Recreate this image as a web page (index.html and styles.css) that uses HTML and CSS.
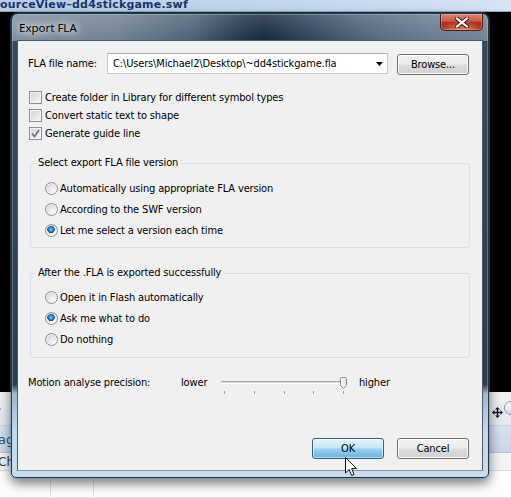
FILE: index.html
```html
<!DOCTYPE html>
<html>
<head>
<meta charset="utf-8">
<link rel="stylesheet" href="styles.css">
</head>
<body>
<div class="desk">
  <div class="appbar"><span class="apptitle">ourceView–dd4stickgame.swf</span></div>
  <div class="dark"></div>
  <div class="band band-a">
    <span class="tri">▸</span>
    <span class="movebox">
      <svg class="move" width="11" height="11" viewBox="0 0 11 11"><path d="M5.5 0 L8 2.5 H6.2 V4.8 H8.5 V3 L11 5.5 L8.5 8 V6.2 H6.2 V8.5 H8 L5.5 11 L3 8.5 H4.8 V6.2 H2.5 V8 L0 5.5 L2.5 3 V4.8 H4.8 V2.5 H3 Z" fill="#111"/></svg>
      <span class="knob"></span>
    </span>
  </div>
  <div class="band band-b"><span class="ag">ag</span></div>
  <div class="band band-c"><span class="cha">Cha</span></div>
  <div class="band band-d"><span class="vline v1"></span><span class="vline v2"></span></div>
</div>

<div class="window">
  <div class="titlebar">
    <span class="title">Export FLA</span>
    <span class="close">
      <svg width="14" height="11" viewBox="0 0 14 11"><path d="M2 1.5 L12 9.5 M12 1.5 L2 9.5" stroke="#3a1a16" stroke-width="4" stroke-linecap="square"/><path d="M2 1.5 L12 9.5 M12 1.5 L2 9.5" stroke="#fff" stroke-width="2.2" stroke-linecap="square"/></svg>
    </span>
  </div>
  <div class="client">
    <div class="file-row">
      <span class="file-label">FLA file name:</span>
      <div class="combo">
        <span class="combo-text">C:\Users\Michael2\Desktop\~dd4stickgame.fla</span>
        <svg class="combo-arrow" width="7" height="4" viewBox="0 0 7 4"><path d="M0 0 H7 L3.5 4 Z" fill="#000"/></svg>
      </div>
      <button class="btn browse">Browse...</button>
    </div>

    <div class="checks">
      <label class="check"><span class="box"></span>Create folder in Library for different symbol types</label>
      <label class="check"><span class="box"></span>Convert static text to shape</label>
      <label class="check"><span class="box checked"><svg width="9" height="9" viewBox="0 0 9 9"><path d="M1 4.5 L3.5 7.5 L8 1" fill="none" stroke="#5a6f92" stroke-width="1.6"/></svg></span>Generate guide line</label>
    </div>

    <fieldset class="group g1">
      <legend>Select export FLA file version</legend>
      <div class="group-body">
        <div class="radio-row"><span class="radio"></span>Automatically using appropriate FLA version</div>
        <div class="radio-row"><span class="radio"></span>According to the SWF version</div>
        <div class="radio-row"><span class="radio on"></span>Let me select a version each time</div>
      </div>
    </fieldset>

    <fieldset class="group g2">
      <legend>After the .FLA is exported successfully</legend>
      <div class="group-body">
        <div class="radio-row"><span class="radio"></span>Open it in Flash automatically</div>
        <div class="radio-row"><span class="radio on"></span>Ask me what to do</div>
        <div class="radio-row"><span class="radio"></span>Do nothing</div>
      </div>
    </fieldset>

    <div class="motion-row">
      <span class="motion-label">Motion analyse precision:</span>
      <span class="lower">lower</span>
      <div class="slider">
        <div class="track"></div>
        <div class="ticks"><i></i><i></i><i></i><i></i><i></i></div>
        <svg class="thumb" width="7" height="12" viewBox="0 0 7 12"><defs><linearGradient id="tg" x1="0" x2="1"><stop offset="0" stop-color="#fdfdfd"/><stop offset="1" stop-color="#dcdcdc"/></linearGradient></defs><path d="M0.5 1.5 Q0.5 0.5 1.5 0.5 H5.5 Q6.5 0.5 6.5 1.5 V8.5 L3.5 11.5 L0.5 8.5 Z" fill="url(#tg)" stroke="#8a8a8a"/></svg>
      </div>
      <span class="higher">higher</span>
    </div>

    <div class="btn-row">
      <button class="btn ok">OK</button>
      <button class="btn">Cancel</button>
    </div>
  </div>
</div>

<svg class="cursor" width="13" height="20" viewBox="0 0 13 20"><path d="M0.5 0.5 L0.5 16 L4.2 12.5 L6.6 18.5 L9 17.5 L6.7 11.6 L11.5 11.6 Z" fill="#fff" stroke="#111" stroke-linejoin="round"/></svg>
</body>
</html>
```

FILE: styles.css
```css
html, body {
  margin: 0;
  padding: 0;
}
body {
  width: 511px;
  height: 498px;
  overflow: hidden;
  position: relative;
  background: #000;
}

/* background application */
.desk {
  display: flex;
  flex-direction: column;
  height: 498px;
}
.appbar {
  height: 11px;
  background: linear-gradient(to right, #b7cee8, #c3d7ee 60%, #d6e4f3);
  overflow: hidden;
  border-bottom: 1px solid #8ea7c4;
}
.apptitle {
  display: block;
  font-family: "DejaVu Sans", sans-serif;
  font-weight: bold;
  font-size: 11px;
  letter-spacing: 0.2px;
  line-height: 11px;
  margin-top: -1px;
  color: #1b356a;
  white-space: nowrap;
}
.dark {
  height: 380px;
  background: #000;
}
.band {
  display: flex;
  justify-content: space-between;
  align-items: center;
  font-family: "DejaVu Sans", sans-serif;
  font-size: 12px;
  overflow: hidden;
}
.band-a {
  height: 33px;
  background: linear-gradient(#eef1f5, #e4e9ef);
  border-bottom: 1px solid #c9d3de;
}
.tri {
  font-size: 8px;
  color: #222;
  margin-left: -3px;
}
.movebox {
  display: flex;
  align-items: flex-start;
  gap: 1px;
  height: 20px;
  padding-top: 4px;
}
.move { margin-top: 6px; }
.knob {
  width: 12px;
  height: 12px;
  border-radius: 50%;
  border: 1px solid #8895a3;
  background: linear-gradient(#ffffff, #d8dee5);
  margin-right: -7px;
}
.band-b {
  height: 26px;
  background: linear-gradient(#d6e1ee, #c8d6e7);
  border-bottom: 1px solid #b4c2d3;
}
.ag {
  color: #2d5583;
  margin-left: -2px;
  font-size: 13px;
}
.band-c {
  height: 17px;
  background: #f1f3f6;
  border-bottom: 1px solid #d8dde3;
}
.cha {
  color: #333;
  margin-left: -2px;
  font-size: 12px;
}
.band-d {
  flex: 1;
  background: #fdfdfd;
  justify-content: flex-start;
  align-items: stretch;
  border-bottom: 1px solid #dde2e8;
}
.vline {
  width: 1px;
  background: #dde2e8;
}
.v1 { margin-left: 50px; }
.v2 { margin-left: 42px; }

/* dialog window (window on desktop) */
.window {
  position: absolute;
  left: 11px;
  top: 13px;
  border: 1px solid #26323d;
  border-radius: 7px 7px 5px 5px;
  display: flex;
  flex-direction: column;
  padding: 0 5px 6px 5px;
  box-sizing: border-box;
  width: 478px;
  height: 465px;
  background:
    linear-gradient(to bottom, rgba(255,255,255,0.18), rgba(255,255,255,0.02) 26px, rgba(255,255,255,0) 27px),
    linear-gradient(to right, #7d8d9c 0%, #6d7f90 22%, #4a5e72 38%, #1e3149 48%, #13243a 53%, #2a3f57 62%, #50657a 75%, #65798c 88%, #6f8193 100%) top / 100% 27px no-repeat,
    linear-gradient(to bottom, #3a4a59 0%, #2e3d4c 80%, #9fb6cc 82%, #c4d7ea 90%, #c9dcef 100%);
  box-shadow: inset 0 0 0 1px rgba(190, 215, 235, 0.35), 0 0 0 1px rgba(70, 180, 230, 0.3), 0 5px 12px rgba(0,0,0,0.55);
  font-family: "DejaVu Sans Condensed", "DejaVu Sans", sans-serif;
  font-stretch: condensed;
  font-size: 11px;
  letter-spacing: -0.15px;
  color: #000;
}
.titlebar {
  height: 26px;
  display: flex;
  align-items: flex-start;
  flex: 0 0 26px;
}
.title {
  font-family: "Noto Sans", sans-serif;
  font-stretch: normal;
  letter-spacing: 0;
  font-size: 11.5px;
  line-height: 14px;
  margin-top: 7px;
  margin-left: 2px;
  color: #000;
  text-shadow: 0 0 6px rgba(255,255,255,0.95), 0 0 10px rgba(255,255,255,0.8), 0 0 14px rgba(255,255,255,0.6);
}
.close {
  margin-left: auto;
  width: 43px;
  height: 17px;
  box-sizing: border-box;
  border: 1px solid #4a1a14;
  border-top: none;
  border-radius: 0 0 5px 5px;
  background:
    radial-gradient(ellipse 60% 55% at 50% 100%, rgba(255,170,110,0.75), rgba(255,120,80,0) 100%),
    linear-gradient(#d98577 0%, #c95a48 45%, #b02f1d 52%, #9c2415 100%);
  box-shadow: inset 0 0 0 1px rgba(255,210,200,0.35);
  display: flex;
  align-items: center;
  justify-content: center;
}

.client {
  flex: 1;
  display: flex;
  flex-direction: column;
  background: #f0f0f0;
  border: 1px solid #4b5b6a;
  border-bottom-color: #8796a6;
  padding: 11px 13px 11px 10px;
}

.file-row {
  display: flex;
  align-items: center;
  height: 22px;
}
.file-label {
  flex: 0 0 79px;
}
.combo {
  width: 281px;
  height: 21px;
  box-sizing: border-box;
  border: 1px solid #c3c7cd;
  border-top-color: #abadb3;
  background: #fff;
  display: flex;
  align-items: center;
  padding: 0 4px 0 5px;
}
.combo-text {
  flex: 1;
  white-space: nowrap;
}
.combo-arrow { margin-top: 1px; }

.btn {
  font: inherit;
  letter-spacing: inherit;
  color: #000;
  width: 72px;
  height: 21px;
  padding: 0;
  border: 1px solid #707070;
  border-radius: 3px;
  background: linear-gradient(#f2f2f2 0%, #ebebeb 48%, #dddddd 52%, #cfcfcf 100%);
  box-shadow: inset 0 0 0 1px #fbfbfb;
}
.browse {
  margin-left: 9px;
  margin-top: 2px;
}

.checks {
  margin-top: 14px;
  margin-left: 1px;
  display: flex;
  flex-direction: column;
}
.check {
  display: flex;
  align-items: center;
  height: 18px;
  gap: 3px;
}
.box {
  width: 13px;
  height: 13px;
  box-sizing: border-box;
  border: 1px solid #8f8f8f;
  background: linear-gradient(135deg, #d2d2d2, #f7f7f7);
  box-shadow: inset 0 0 0 1px #f4f4f4;
  display: flex;
  align-items: center;
  justify-content: center;
}

.group {
  border: 1px solid #d5dfe5;
  border-radius: 3px;
  margin: 14px -1px 0 2px;
  padding: 0;
  min-width: 0;
}
.group legend {
  padding: 0 2px;
  margin-left: 5px;
  line-height: 14px;
}
.group-body {
  padding: 8px 0 6px 14px;
  display: flex;
  flex-direction: column;
}
.g2 { margin-top: 18px; }
.g2 .group-body { padding-top: 7px; padding-bottom: 7px; }
.radio-row {
  display: flex;
  align-items: center;
  height: 21px;
  gap: 2px;
}
.radio {
  width: 13px;
  height: 13px;
  box-sizing: border-box;
  border-radius: 50%;
  border: 1px solid #8e8f8f;
  background: radial-gradient(circle at 65% 70%, #fafafa 0, #eaeaea 35%, #c9c9c9 100%);
  box-shadow: inset 0 0 0 1px rgba(255,255,255,0.6);
}
.radio.on {
  background:
    radial-gradient(circle at 45% 40%, #8ed0f5 0, #2a8ad4 2px, #0e4f98 3.5px, rgba(14,79,152,0) 4px),
    radial-gradient(circle at 65% 70%, #fafafa 0, #eaeaea 35%, #c9c9c9 100%);
}

.motion-row {
  margin-top: 17px;
  display: flex;
  align-items: flex-start;
  line-height: 16px;
}
.motion-label { flex: 0 0 153px; }
.lower { flex: 0 0 40px; }
.slider {
  position: relative;
  width: 126px;
  height: 20px;
}
.track {
  margin-top: 6px;
  height: 1px;
  border-top: 1px solid #a8a8a8;
  border-bottom: 1px solid #ffffff;
  background: #dedede;
}
.ticks {
  display: flex;
  justify-content: space-between;
  width: 120px;
  margin-left: 3px;
  margin-top: 7px;
}
.ticks i {
  display: block;
  width: 1px;
  height: 3px;
  background: #a0a0a0;
}
.thumb {
  position: absolute;
  left: 119px;
  top: 2px;
}
.higher { margin-left: 12px; }

.btn-row {
  margin-top: auto;
  display: flex;
  justify-content: flex-end;
  gap: 13px;
}
.btn.ok {
  border-color: #2c628b;
  background: linear-gradient(#e5f4fc 0%, #c4e5f6 48%, #98d1ef 52%, #68b3db 100%);
  box-shadow: inset 0 0 0 1px rgba(255,255,255,0.5);
}

.cursor {
  position: absolute;
  left: 345px;
  top: 457px;
}
```
